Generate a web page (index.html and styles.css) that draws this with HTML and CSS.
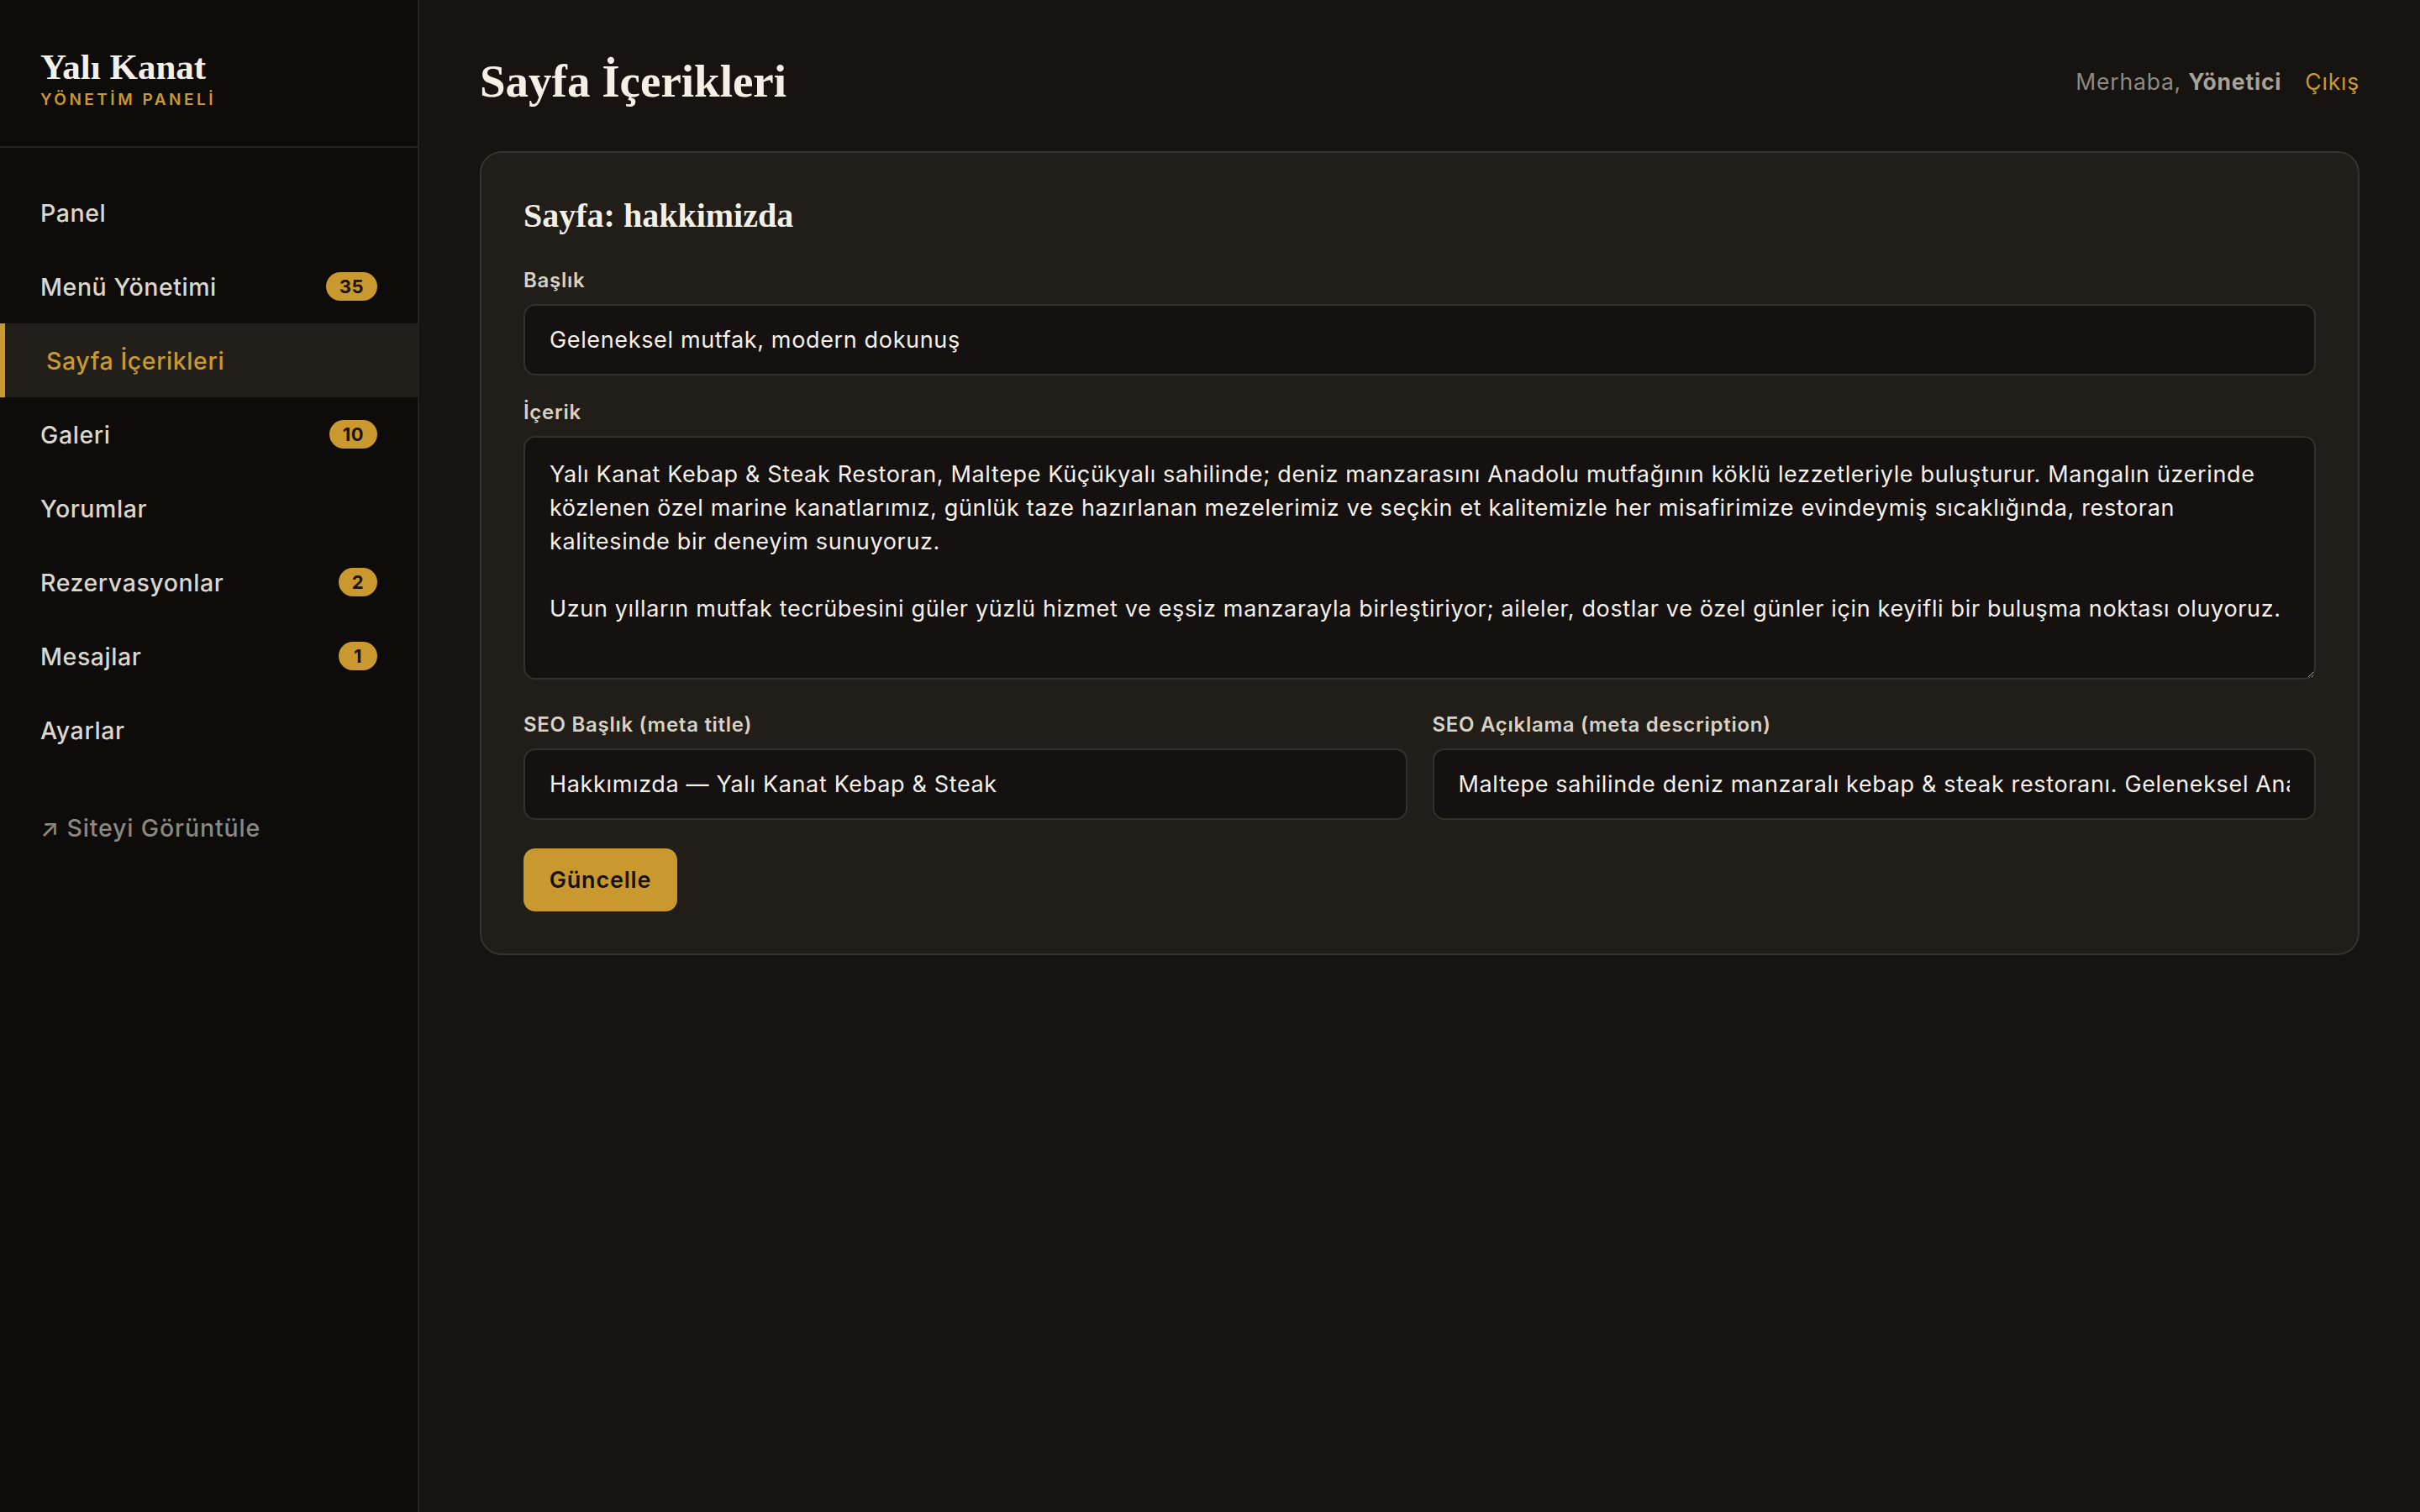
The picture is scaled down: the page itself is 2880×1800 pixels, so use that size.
FILE: index.html
```html
<!DOCTYPE html>
<html lang="tr">
<head>
<meta charset="utf-8">
<title>Sayfa İçerikleri — Yalı Kanat</title>
<link rel="stylesheet" href="styles.css">
</head>
<body>
<div class="layout">
  <aside class="sidebar">
    <div class="brand">
      <div class="brand-name">Yalı Kanat</div>
      <div class="brand-sub">YÖNETİM PANELİ</div>
    </div>
    <nav class="nav">
      <a class="nav-item" href="#">Panel</a>
      <a class="nav-item" href="#">Menü Yönetimi <span class="badge">35</span></a>
      <a class="nav-item active" href="#">Sayfa İçerikleri</a>
      <a class="nav-item" href="#">Galeri <span class="badge">10</span></a>
      <a class="nav-item" href="#">Yorumlar</a>
      <a class="nav-item" href="#">Rezervasyonlar <span class="badge">2</span></a>
      <a class="nav-item" href="#">Mesajlar <span class="badge">1</span></a>
      <a class="nav-item" href="#">Ayarlar</a>
    </nav>
    <a class="site-link" href="#">↗ Siteyi Görüntüle</a>
  </aside>
  <main class="main">
    <header class="topbar">
      <h1 class="page-title">Sayfa İçerikleri</h1>
      <div class="user">
        <span class="hello">Merhaba, <strong>Yönetici</strong></span>
        <a class="logout" href="#">Çıkış</a>
      </div>
    </header>
    <section class="card">
      <h2 class="card-title">Sayfa: hakkimizda</h2>
      <form class="form">
        <div class="field">
          <label class="label">Başlık</label>
          <input class="input" type="text" value="Geleneksel mutfak, modern dokunuş">
        </div>
        <div class="field field-area">
          <label class="label">İçerik</label>
          <textarea class="input textarea" rows="6">Yalı Kanat Kebap &amp; Steak Restoran, Maltepe Küçükyalı sahilinde; deniz manzarasını Anadolu mutfağının köklü lezzetleriyle buluşturur. Mangalın üzerinde közlenen özel marine kanatlarımız, günlük taze hazırlanan mezelerimiz ve seçkin et kalitemizle her misafirimize evindeymiş sıcaklığında, restoran kalitesinde bir deneyim sunuyoruz.

Uzun yılların mutfak tecrübesini güler yüzlü hizmet ve eşsiz manzarayla birleştiriyor; aileler, dostlar ve özel günler için keyifli bir buluşma noktası oluyoruz.</textarea>
        </div>
        <div class="row">
          <div class="field">
            <label class="label">SEO Başlık (meta title)</label>
            <input class="input" type="text" value="Hakkımızda — Yalı Kanat Kebap &amp; Steak">
          </div>
          <div class="field">
            <label class="label">SEO Açıklama (meta description)</label>
            <input class="input" type="text" value="Maltepe sahilinde deniz manzaralı kebap &amp; steak restoranı. Geleneksel Anadolu lezzetleri, modern sunum.">
          </div>
        </div>
        <button class="btn" type="button">Güncelle</button>
      </form>
    </section>
  </main>
</div>
</body>
</html>
```
FILE: styles.css
```css
* { box-sizing: border-box; }
html, body { margin: 0; padding: 0; }
body {
  background: #161311;
  color: #f3eee6;
  font-family: Inter, "Noto Sans", sans-serif;
}
.layout {
  display: flex;
  min-height: 1800px;
}
.sidebar {
  width: 499px;
  flex-shrink: 0;
  background: #0d0c0b;
  border-right: 2px solid #25221f;
  display: flex;
  flex-direction: column;
}
.brand {
  padding: 57px 48px 43px;
  border-bottom: 2px solid #272421;
}
.brand-name {
  font-family: "Liberation Serif", "DejaVu Serif", serif;
  font-weight: 700;
  font-size: 43px;
  line-height: 46px;
  color: #f5f0e6;
}
.brand-sub {
  margin-top: 4px;
  font-size: 19px;
  line-height: 24px;
  font-weight: 600;
  letter-spacing: 3.5px;
  color: #c9992f;
}
.nav {
  display: flex;
  flex-direction: column;
  padding-top: 33px;
}
.nav-item {
  display: flex;
  align-items: center;
  justify-content: space-between;
  height: 88px;
  padding: 0 48px;
  font-size: 28.5px;
  letter-spacing: 0.02em;
  font-weight: 500;
  color: #ddd6ca;
  text-decoration: none;
}
.nav-item.active {
  background: #221f1b;
  border-left: 6px solid #c9992f;
  padding-left: 49px;
  color: #c9992f;
}
.badge {
  display: inline-flex;
  align-items: center;
  justify-content: center;
  height: 34px;
  min-width: 46px;
  padding: 0 16px;
  border-radius: 17px;
  background: #c9992f;
  color: #1a140c;
  font-size: 22px;
  letter-spacing: 0.02em;
  font-weight: 700;
}
.site-link {
  margin-top: 53px;
  padding: 0 48px;
  font-size: 28.5px;
  letter-spacing: 0.03em;
  line-height: 40px;
  font-weight: 500;
  color: #8d877e;
  text-decoration: none;
}
.main {
  flex: 1;
  padding: 64px 72px 72px;
}
.topbar {
  display: flex;
  align-items: center;
  justify-content: space-between;
  height: 65px;
  margin-bottom: 51px;
}
.page-title {
  margin: 0;
  font-family: "Liberation Serif", "DejaVu Serif", serif;
  font-weight: 700;
  font-size: 55px;
  line-height: 65px;
  color: #f5f0e6;
}
.user {
  display: flex;
  align-items: center;
  gap: 28px;
  font-size: 26.5px;
  letter-spacing: 0.03em;
}
.hello { color: #8f8a82; }
.hello strong { color: #a8a298; font-weight: 700; }
.logout { color: #c9992f; text-decoration: none; }
.card {
  background: #211e1a;
  border: 2px solid #36322d;
  border-radius: 26px;
  padding: 50px;
}
.card-title {
  margin: 0 0 34px;
  font-family: "Liberation Serif", "DejaVu Serif", serif;
  font-weight: 700;
  font-size: 40px;
  line-height: 50px;
  color: #f5f0e6;
}
.form { display: flex; flex-direction: column; }
.field { display: flex; flex-direction: column; margin-bottom: 26px; }
.field-area { margin-bottom: 36px; }
.label {
  font-size: 24px;
  letter-spacing: 0.03em;
  line-height: 35px;
  font-weight: 600;
  color: #d9d1c4;
  margin-bottom: 11px;
}
.input {
  display: block;
  width: 100%;
  height: 85px;
  padding: 0 29px;
  background: #141110;
  border: 2px solid #34302b;
  border-radius: 14px;
  color: #f5f0e8;
  font-family: Inter, "Noto Sans", sans-serif;
  font-size: 27px;
  letter-spacing: 0.024em;
  outline: none;
}
.textarea {
  height: 290px;
  padding: 24px 29px;
  line-height: 40px;
  resize: vertical;
}
.row {
  display: grid;
  grid-template-columns: 1fr 1fr;
  gap: 30px;
}
.row .field { margin-bottom: 34px; }
.btn {
  align-self: flex-start;
  width: 183px;
  height: 75px;
  background: #c9992f;
  color: #17120b;
  border: none;
  border-radius: 14px;
  font-family: Inter, "Noto Sans", sans-serif;
  font-size: 27px;
  letter-spacing: 0.03em;
  font-weight: 600;
}
```
